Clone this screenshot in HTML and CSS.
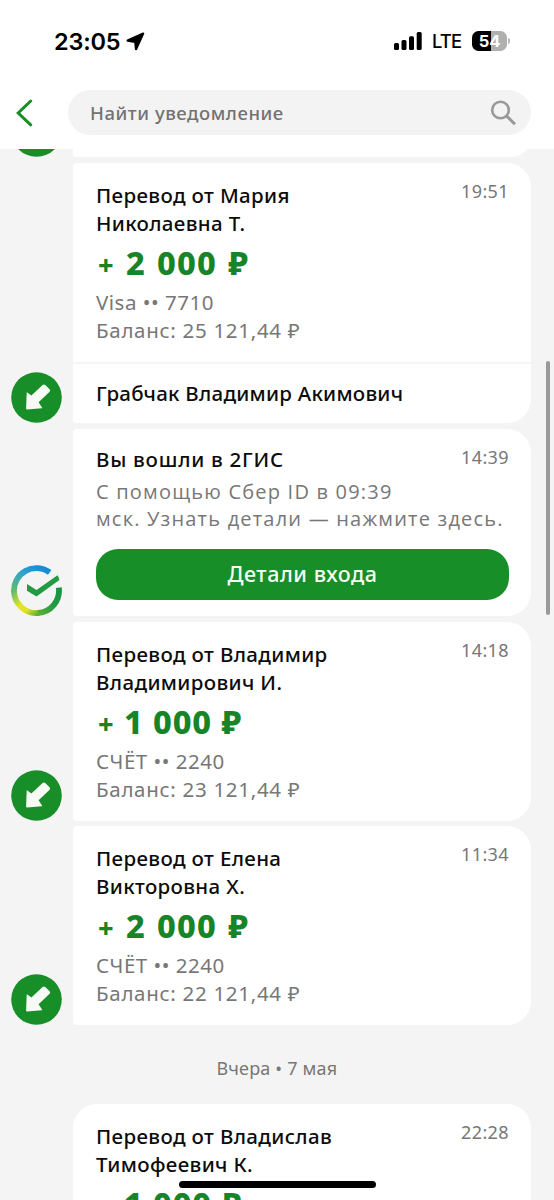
FILE: index.html
```
<!DOCTYPE html>
<html lang="ru">
<head>
<meta charset="utf-8">
<title>Уведомления</title>
<link rel="stylesheet" href="styles.css">
</head>
<body>
<svg class="defs" width="0" height="0" aria-hidden="true">
  <symbol id="incoming" viewBox="0 0 51 51">
    <circle cx="25.5" cy="25.5" r="25.3" fill="#188e28"/>
    <path d="M15.7 20.6Q15.6 19.9 16.3 20.4L20.4 23.6L31.6 12.9Q33 11.9 34.2 13L38.6 17.2Q39.8 18.5 38.6 19.8L27.6 30.3L31 35.4Q31.6 36.3 30.6 36.3L16.2 37.4Q15.1 37.4 15.1 36.4Z" fill="#f7faf5"/>
  </symbol>
</svg>
<div class="screen">
  <header class="header">
    <div class="status">
      <span class="clock">23:05</span>
      <svg class="location" width="19" height="19" viewBox="0 0 19 19"><path d="M1.6 8.6L17.2 1.6L10 17.2L9.2 10Z" fill="#000" stroke="#000" stroke-width="2.2" stroke-linejoin="round"/></svg>
      <svg class="signal" width="28" height="18" viewBox="0 0 28 18"><rect x="0" y="11" width="5" height="7" rx="1.5"/><rect x="7.5" y="8" width="5" height="10" rx="1.5"/><rect x="15" y="4.2" width="5" height="13.8" rx="1.5"/><rect x="22.7" y="0" width="5" height="18" rx="1.5"/></svg>
      <span class="network">LTE</span>
      <span class="battery">54</span>
      <span class="battery-tip"></span>
    </div>
    <div class="search-row">
      <svg class="back" width="17" height="28" viewBox="0 0 17 28"><path d="M14.7 2L2.2 14L14.7 25.8" fill="none" stroke="#188e28" stroke-width="3" stroke-linecap="round"/></svg>
      <div class="search">
        <span class="placeholder">Найти уведомление</span>
        <svg width="26" height="26" viewBox="0 0 26 26" fill="none" stroke="#999"><circle cx="10.5" cy="10" r="8.3" stroke-width="2.6"/><path d="M16.5 16L25 24.3" stroke-width="3"/></svg>
      </div>
    </div>
  </header>

  <main class="feed">
    <section class="row cut">
      <svg class="avatar"><use href="#incoming"/></svg>
      <div class="card"></div>
    </section>

    <section class="row">
      <svg class="avatar"><use href="#incoming"/></svg>
      <article class="card">
        <div class="content">
          <time>19:51</time>
          <h2>Перевод от Мария<br>Николаевна Т.</h2>
          <p class="amount"><span class="plus">+</span> 2 000 ₽</p>
          <p class="info">Visa •• 7710<br><span class="balance">Баланс: 25 121,44 ₽</span></p>
        </div>
        <div class="message">Грабчак Владимир Акимович</div>
      </article>
    </section>

    <section class="row">
      <svg class="avatar" viewBox="0 0 51 51">
        <defs>
          <linearGradient id="blue" x1="0" y1="1" x2="1" y2="0"><stop offset="0" stop-color="#63bd68"/><stop offset=".55" stop-color="#2ba1d3"/><stop offset="1" stop-color="#1685d4"/></linearGradient>
          <linearGradient id="yellow" x1="0" y1="0" x2="1" y2="1"><stop offset="0" stop-color="#65b96b"/><stop offset=".45" stop-color="#e2e528"/><stop offset=".7" stop-color="#dfe329"/><stop offset="1" stop-color="#5caf37"/></linearGradient>
          <linearGradient id="green" x1="0" y1="1" x2="1" y2="0"><stop offset="0" stop-color="#5caf37"/><stop offset=".5" stop-color="#239c40"/><stop offset="1" stop-color="#189344"/></linearGradient>
        </defs>
        <g fill="none" stroke-width="5.8">
          <path d="M3 27A22.5 22.5 0 0 1 38.7 7.4" stroke="url(#blue)"/>
          <path d="M3 25.5A22.5 22.5 0 0 0 28 47.9" stroke="url(#yellow)"/>
          <path d="M27 48A22.5 22.5 0 0 0 47.8 22.7" stroke="url(#green)"/>
        </g>
        <path d="M16 19L25.5 25L46.5 10.2Q48 12.2 48.4 15L25.5 31.5L16 25.8Z" fill="#219a43"/>
      </svg>
      <article class="card login">
        <time>14:39</time>
        <h2>Вы вошли в 2ГИС</h2>
        <p class="text">С помощью Сбер ID в 09:39<br>мск. Узнать детали — нажмите здесь.</p>
        <div class="button">Детали входа</div>
      </article>
    </section>

    <section class="row">
      <svg class="avatar"><use href="#incoming"/></svg>
      <article class="card">
        <div class="content">
          <time>14:18</time>
          <h2>Перевод от Владимир<br>Владимирович И.</h2>
          <p class="amount narrow"><span class="plus">+</span> 1 000 ₽</p>
          <p class="info">СЧЁТ •• 2240<br><span class="balance">Баланс: 23 121,44 ₽</span></p>
        </div>
      </article>
    </section>

    <section class="row tight">
      <svg class="avatar"><use href="#incoming"/></svg>
      <article class="card">
        <div class="content">
          <time>11:34</time>
          <h2>Перевод от Елена<br>Викторовна Х.</h2>
          <p class="amount"><span class="plus">+</span> 2 000 ₽</p>
          <p class="info">СЧЁТ •• 2240<br><span class="balance">Баланс: 22 121,44 ₽</span></p>
        </div>
      </article>
    </section>

    <div class="date">Вчера • 7 мая</div>

    <section class="row">
      <article class="card first">
        <div class="content">
          <time>22:28</time>
          <h2>Перевод от Владислав<br>Тимофеевич К.</h2>
          <p class="amount narrow"><span class="plus">+</span> 1 000 ₽</p>
        </div>
      </article>
    </section>
  </main>
  <div class="scrollbar"></div>
  <div class="home"></div>
</div>
</body>
</html>
```
FILE: styles.css
```
* { box-sizing: border-box; }
body { margin: 0; font-family: "Noto Sans", sans-serif; }
.defs { position: absolute; }
.screen {
  position: relative;
  width: 554px;
  height: 1200px;
  overflow: hidden;
  background: #f4f4f4;
  white-space: nowrap;
}
.header { height: 149px; background: #fff; }
.status {
  display: flex;
  align-items: center;
  height: 82px;
  padding-left: 54px;
  font-family: Inter, sans-serif;
  color: #000;
}
.clock { width: 72px; font-size: 23.5px; font-weight: 600; letter-spacing: -0.2px; }
.signal { margin-left: 249px; }
.network { width: 40px; margin-left: 10px; font-size: 18.5px; font-weight: 500; letter-spacing: -0.9px; }
.battery {
  width: 35px;
  height: 20px;
  border-radius: 6.5px;
  background: linear-gradient(90deg, #000 54%, #b0b0b0 54%);
  color: #fff;
  font-size: 16.5px;
  font-weight: 700;
  line-height: 20px;
  text-align: center;
}
.battery-tip { width: 2px; height: 6px; margin-left: 1px; border-radius: 0 2px 2px 0; background: #bbb; }
.search-row { display: flex; align-items: center; height: 61px; padding: 0 23px 0 16px; }
.search {
  display: flex;
  flex: 1;
  align-items: center;
  justify-content: space-between;
  height: 45px;
  margin-left: 35px;
  padding: 0 15px 0 22px;
  border-radius: 23px;
  background: #f3f3f3;
}
.placeholder { color: #727272; font-size: 18.5px; font-weight: 490; letter-spacing: 0.55px; }
.feed { display: flex; flex-direction: column; gap: 6px; }
.row { display: flex; align-items: flex-end; justify-content: flex-end; padding-right: 23px; }
.row.tight { margin-top: -1px; }
.avatar { width: 51px; height: 51px; margin-right: 11px; }
.row.cut { height: 8px; overflow: hidden; }
.card { width: 458px; border-radius: 4px 24px 24px 4px; background: #fff; }
.cut .card { height: 40px; }
.card.first { border-radius: 24px 24px 0 0; }
.content { padding: 18px 22px 18px 23px; }
time { float: right; margin-top: -3px; color: #777; font-size: 18px; line-height: 26px; letter-spacing: 0.4px; }
h2 { margin: 0; color: #0c0c0c; font-size: 20.5px; font-weight: 480; line-height: 28px; letter-spacing: 0.36px; }
.amount {
  height: 44px;
  margin: 3px 0 4px;
  padding-left: 2px;
  color: #188428;
  font-size: 32.5px;
  font-weight: 850;
  line-height: 45px;
  letter-spacing: 1.2px;
  word-spacing: 1.5px;
}
.amount.narrow { letter-spacing: 0.8px; word-spacing: 0.3px; }
.plus { font-size: 27px; }
.info { margin: 0; color: #777; font-size: 20.5px; line-height: 28px; letter-spacing: 0.5px; }
.balance { letter-spacing: 0.7px; }
.message {
  height: 61px;
  padding: 15px 23px;
  border-top: 2px solid #f4f4f4;
  color: #0c0c0c;
  font-size: 20.5px;
  font-weight: 480;
  line-height: 28px;
  letter-spacing: 0.25px;
}
.login { height: 187px; padding: 16px 22px 16px 23px; }
.login time { margin-top: -1px; }
.login h2 { letter-spacing: 0.75px; }
.text {
  margin: 6px 0 17px;
  color: #777;
  font-family: "Open Sans", "Noto Sans", sans-serif;
  font-size: 20px;
  line-height: 26.5px;
  letter-spacing: 1.2px;
}
.button {
  height: 51px;
  border-radius: 22px;
  background: #188e28;
  color: #f4fff4;
  font-size: 21.5px;
  font-weight: 480;
  line-height: 50px;
  letter-spacing: 0.55px;
  text-align: center;
}
.date { height: 67px; padding-top: 24px; color: #777; font-size: 18px; line-height: 26px; letter-spacing: 0.2px; text-align: center; }
.scrollbar { position: absolute; top: 361px; right: 4px; width: 4px; height: 254px; border-radius: 2px; background: #999; }
.home { position: absolute; bottom: 12px; left: 179px; width: 197px; height: 7px; border-radius: 4px; background: #000; }
```
